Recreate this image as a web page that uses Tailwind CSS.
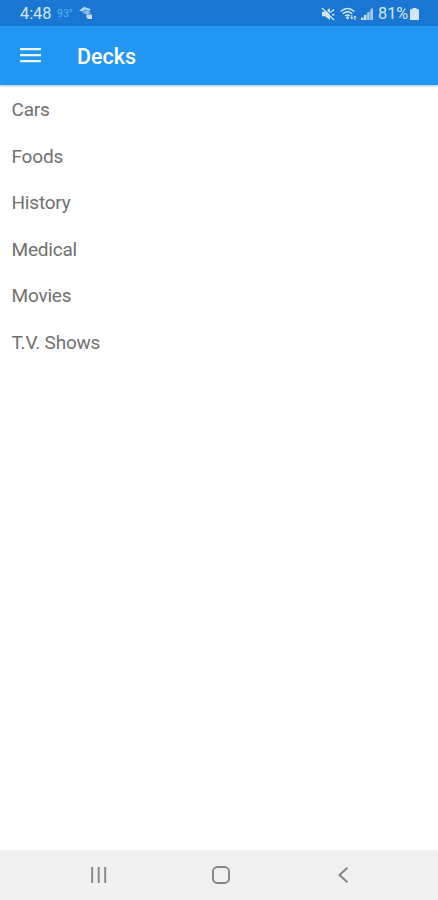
<!DOCTYPE html>
<html lang="en">
<head>
<meta charset="utf-8">
<meta name="viewport" content="width=device-width, initial-scale=1">
<title>Decks</title>
<script src="https://cdn.jsdelivr.net/npm/@tailwindcss/browser@4"></script>
</head>
<body class="bg-white">
<div class="flex h-[900px] w-[438px] flex-col overflow-hidden font-['Roboto',sans-serif]">
  <div class="flex h-[26px] shrink-0 items-center justify-between bg-[#1976d2] pt-[2px] pr-[19px] pl-5 text-[#d3e7fa]">
    <div class="flex items-center">
      <span class="w-[37px] text-[16.3px] leading-none whitespace-nowrap">4:48</span>
      <span class="w-[22px] text-[10.5px] leading-none text-[#4db8f5]">93°</span>
      <svg class="h-[15px] w-[14px]" viewBox="0 0 14 15" fill="currentColor">
        <path d="M0 4.5 5 .8 12 3.2 10 5 6 3.7 3.5 5.7Z" opacity=".8"/>
        <path d="M3.5 6.8 6.5 4.5 12 6 8.5 8.7Z" opacity=".65"/>
        <path d="M7.5 8.5h5.5v4.5H9L7.5 11.5Z" opacity=".9"/>
      </svg>
    </div>
    <div class="flex items-center">
      <svg class="mr-[5px] h-[14px] w-[14px]" viewBox="0 0 14 14" fill="currentColor">
        <path d="M1 4.8h3L9 1v12L4 9.2H1Z"/>
        <path d="m2 .2 12 12" stroke="#1976d2" stroke-width="1.2"/>
        <path d="m1 1 12 12M9.5 5.5 13 2.5M11 7.8h2.5" fill="none" stroke="currentColor" stroke-width="1.4"/>
      </svg>
      <svg class="mr-1 h-[14px] w-[17px]" viewBox="0 0 17 14" fill="none" stroke="currentColor" stroke-width="1.4">
        <path d="M.7 4.5Q7.5-1.4 14.3 4.5M2.8 6.8Q7.5 2.8 12.2 6.8M5 9Q7.5 7 10 9"/>
        <path d="m6.2 10.6 1.3-1 1.3 1-1.3 1.6Z" fill="currentColor" stroke-width=".8"/>
        <path d="M11.8 8v4m-1.3-1.5 1.3 1.5 1.2-1.5M15 13V9m-1.2 1.5L15 9l1.2 1.5" stroke-width="1"/>
      </svg>
      <svg class="mr-[5px] h-[13px] w-[12px]" viewBox="0 0 12 13" fill="currentColor">
        <path d="M0 13 12 1v12Z" opacity=".35"/>
        <path d="M0 10.5h2.2V13H0ZM3 8h2.3v5H3Z"/>
        <path d="M6.2 5h2.3v8H6.2ZM9.4 1.5H12V13H9.4Z" opacity=".6"/>
      </svg>
      <span class="w-[32px] text-[16.3px] leading-none whitespace-nowrap">81%</span>
      <svg class="h-[12px] w-[9px]" viewBox="0 0 9 12" fill="currentColor"><path d="M2.5 0h4v1.3H9V12H0V1.3h2.5Z"/></svg>
    </div>
  </div>
  <header class="z-10 flex h-[59px] shrink-0 items-center bg-[#2196f3] pl-5 text-white shadow-[0_1px_2px_rgba(33,100,150,0.4)]">
    <svg class="mr-[36px] mb-[2px] h-4 w-[21px]" viewBox="0 0 21 16" fill="#e6f7ff"><path d="M0 1h21v2.2H0ZM0 7h21v2.2H0ZM0 13h21v2.2H0Z"/></svg>
    <h1 class="pt-[2px] text-[21.5px] leading-none font-medium">Decks</h1>
  </header>
  <main class="flex-1 pt-[2px] text-[19px] tracking-[-0.2px] text-[#707070]">
    <ul>
      <li class="flex h-[46.5px] items-center pl-[11.5px]">Cars</li>
      <li class="flex h-[46.5px] items-center pl-[11.5px]">Foods</li>
      <li class="flex h-[46.5px] items-center pl-[11.5px]">History</li>
      <li class="flex h-[46.5px] items-center pl-[11.5px]">Medical</li>
      <li class="flex h-[46.5px] items-center pl-[11.5px]">Movies</li>
      <li class="flex h-[46.5px] items-center pl-[11.5px]">T.V. Shows</li>
    </ul>
  </main>
  <nav class="flex h-[50px] shrink-0 items-center bg-[#f0f0f0] pl-[91px]">
    <svg class="mr-[105px] h-4 w-4" viewBox="0 0 16 16" fill="none" stroke="#858585" stroke-width="1.9"><path d="M1.2 0v16M7.7 0v16M14.2 0v16"/></svg>
    <svg class="mr-[108px] h-[18px] w-[18px]" viewBox="0 0 18 18" fill="none" stroke="#858585" stroke-width="1.9"><rect x="1" y="1" width="16" height="16" rx="4.5"/></svg>
    <svg class="h-4 w-[11px]" viewBox="0 0 11 16" fill="none" stroke="#858585" stroke-width="2"><path d="M9.4.8 1.5 8l7.9 7.2"/></svg>
  </nav>
</div>
</body>
</html>
